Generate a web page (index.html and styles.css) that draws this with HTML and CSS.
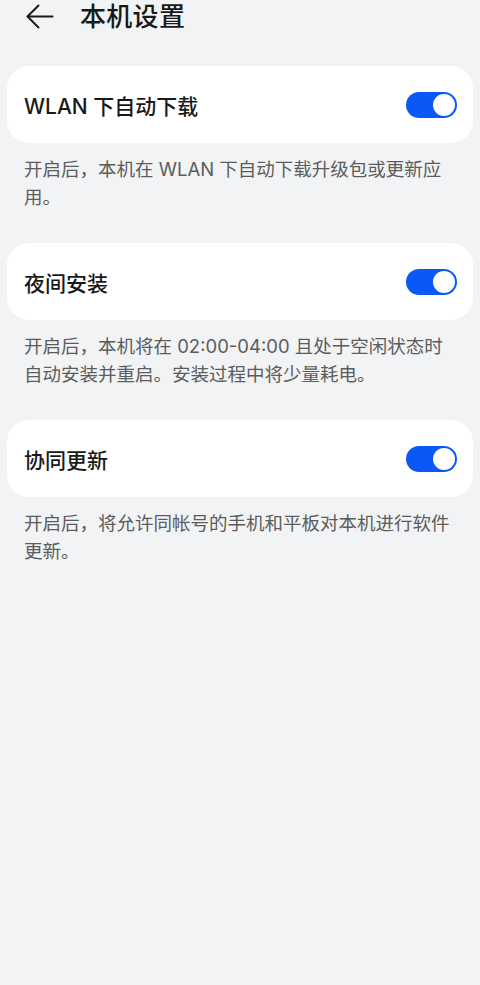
FILE: index.html
```html
<!DOCTYPE html>
<html lang="zh-CN">
<head>
<meta charset="utf-8">
<link rel="stylesheet" href="styles.css">
</head>
<body>
<div class="page">
  <header class="header">
    <svg class="back" width="28" height="26" viewBox="0 0 28 26" fill="none" stroke="#1a1a1a" stroke-width="2" stroke-linecap="round" stroke-linejoin="round">
      <path d="M12.5 1.5 L1.5 12.5 L12.5 23.5"/>
      <path d="M1.8 12.5 H26.5"/>
    </svg>
    <h1 class="title">本机设置</h1>
  </header>

  <section class="group">
    <div class="card">
      <span class="label">WLAN 下自动下载</span>
      <span class="switch"><span class="knob"></span></span>
    </div>
    <p class="desc">开启后，本机在 WLAN 下自动下载升级包或更新应用。</p>
  </section>

  <section class="group">
    <div class="card">
      <span class="label">夜间安装</span>
      <span class="switch"><span class="knob"></span></span>
    </div>
    <p class="desc">开启后，本机将在 02:00-04:00 且处于空闲状态时自动安装并重启。安装过程中将少量耗电。</p>
  </section>

  <section class="group">
    <div class="card">
      <span class="label">协同更新</span>
      <span class="switch"><span class="knob"></span></span>
    </div>
    <p class="desc">开启后，将允许同帐号的手机和平板对本机进行软件更新。</p>
  </section>
</div>
</body>
</html>
```

FILE: styles.css
```css
html, body {
  margin: 0;
  padding: 0;
  background: #f1f3f5;
}
body {
  font-family: "Inter", "Noto Sans CJK SC", sans-serif;
  color: #191919;
  width: 480px;
  min-height: 985px;
}
.page {
  padding: 0 7px;
}
.header {
  display: flex;
  align-items: center;
  height: 34px;
  padding-left: 19px;
}
.back {
  display: block;
  flex: none;
  margin-top: -1px;
}
.title {
  margin: 0 0 0 26px;
  font-size: 26px;
  font-weight: 500;
  line-height: 34px;
  color: #191919;
  letter-spacing: 0.3px;
}
.group {
  margin-top: 32px;
}
.card {
  display: flex;
  align-items: center;
  justify-content: space-between;
  height: 77px;
  background: #ffffff;
  border-radius: 22px;
  padding: 0 16px 0 17px;
}
.label {
  font-size: 21px;
  font-weight: 500;
  color: #191919;
}
.switch {
  position: relative;
  display: block;
  width: 51px;
  height: 26px;
  border-radius: 13px;
  background: #0a59f7;
  flex: none;
}
.knob {
  position: absolute;
  right: 2px;
  top: 2px;
  width: 22px;
  height: 22px;
  border-radius: 50%;
  background: #ffffff;
}
.desc {
  margin: 0;
  padding: 12px 17px 0 17px;
  font-size: 18.5px;
  line-height: 28px;
  color: #5c5c5c;
}
```
